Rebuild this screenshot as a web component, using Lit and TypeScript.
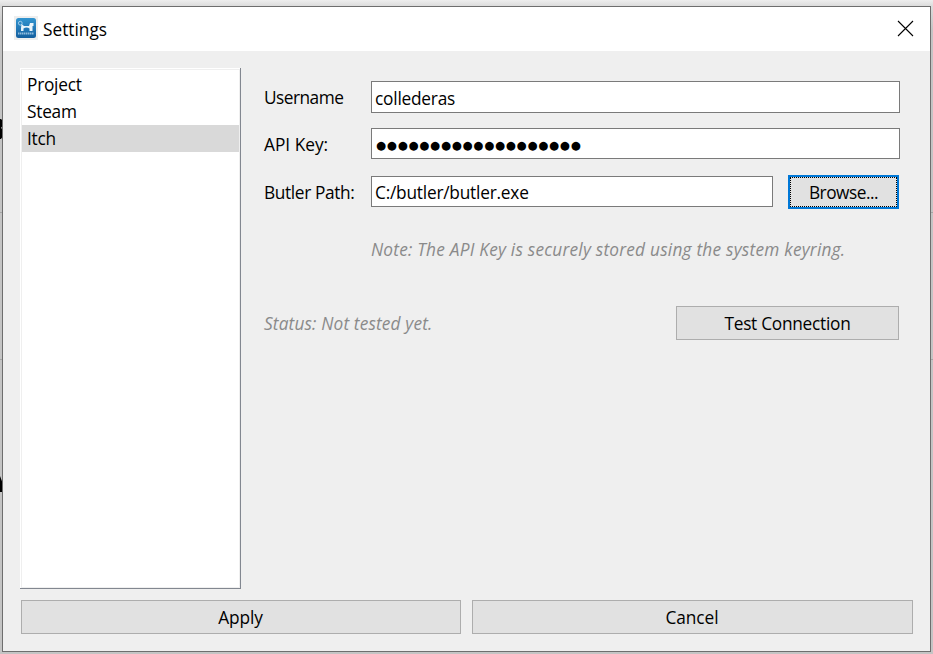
import { LitElement, html, css, svg } from "lit";
import { customElement, state } from "lit/decorators.js";

@customElement("app-root")
export class AppRoot extends LitElement {
  @state() private page = "Itch";

  static styles = css`
    :host {
      display: block;
      box-sizing: border-box;
      position: relative;
      width: 933px;
      height: 654px;
      padding: 6px 2px 2px;
      overflow: hidden;
      background: linear-gradient(#eeeeee 0, #dcdcdc 6px, #c4c4c4 30px, #c4c4c4 100%);
      font: 17.3px/24px "Open Sans", "Noto Sans", sans-serif;
      color: #000;
    }
    * { box-sizing: border-box; }
    .behind { position: absolute; inset: 0; width: 933px; height: 654px; }
    .window {
      position: relative;
      width: 929px;
      height: 646px;
      border: 1px solid #6e6e6e;
      background: #efefef;
      display: flex;
      flex-direction: column;
    }
    .titlebar {
      height: 44px;
      flex: none;
      background: #fff;
      display: flex;
      align-items: center;
      padding: 0 16px 0 11px;
    }
    .logo { width: 24px; height: 24px; margin-top: -2px; }
    .title { margin-left: 5px; padding-top: 2px; flex: 1; }
    .close { width: 17px; height: 17px; margin-top: -2px; }
    .body { display: flex; height: 521px; margin: 17px 0 0 17px; }
    .list {
      width: 221px;
      border: solid #828790;
      border-width: 0 1px 1px 0;
      background: #fff;
      padding: 3px 1px 0 2px;
      box-shadow: inset 1px 1px #fff, inset 2px 2px #efefef, inset -1px -1px #efefef;
    }
    .item { height: 27px; line-height: 27px; padding-left: 5px; letter-spacing: -0.25px; }
    .item.on { background: #d9d9d9; }
    .form { margin: 13px 0 0 23px; width: 636px; }
    .row { display: flex; height: 32px; align-items: center; margin-bottom: 15px; }
    .row.short { height: 31px; margin-bottom: 17px; }
    .label { width: 107px; flex: none; padding-top: 2px; }
    .username { letter-spacing: -0.52px; }
    .path { letter-spacing: -0.37px; }
    .field {
      height: 100%;
      flex: 1;
      display: flex;
      align-items: center;
      background: #fff;
      border: 1px solid #7a7a7a;
      padding: 3px 0 0 3px;
      letter-spacing: -0.22px;
    }
    .secret { font: 11.5px/20px "DejaVu Sans", sans-serif; letter-spacing: 0.78px; margin-left: 1px; }
    .btn {
      height: 34px;
      display: flex;
      align-items: center;
      justify-content: center;
      background: #e1e1e1;
      border: 1px solid #adadad;
      padding-top: 2px;
    }
    .browse {
      width: 111px;
      margin: 0 1px 0 15px;
      padding-top: 2px;
      border: 2px solid #0078d7;
      outline: 1px dotted #000;
      outline-offset: -3px;
      letter-spacing: -0.5px;
    }
    .note { margin: 31px 0 0 107px; letter-spacing: 0.21px; }
    .hint { font-style: italic; color: #8a8a8a; white-space: nowrap; }
    .status { display: flex; align-items: center; justify-content: space-between; margin: 44px 1px 0 0; letter-spacing: 0.14px; }
    .status .hint { padding-top: 2px; }
    .test { width: 223px; letter-spacing: -0.27px; }
    .footer { display: grid; grid-template-columns: 440px 441px; gap: 11px; margin: 11px 0 0 18px; letter-spacing: -0.1px; }
    .footer .btn { padding-right: 1px; }
  `;

  private logo() {
    return svg`<svg class="logo" viewBox="0 0 24 24">
      <defs><linearGradient id="g" x2="0" y2="1"><stop stop-color="#3295d0"/><stop offset="1" stop-color="#145f9f"/></linearGradient></defs>
      <rect width="24" height="24" fill="#eee"/>
      <rect x="2" y="2" width="20" height="20" rx="2.5" fill="url(#g)"/>
      <circle cx="6.3" cy="7.2" r="1.9" fill="none" stroke="#a9d3ee" stroke-width=".9"/>
      <path d="M7.500 8l2.500 2h5l1-3h3.500v3h-1v5h-3v-2.500q-3-2-6 0V15H7v-3z" fill="#e9f4fb"/>
      <path d="M4 17.500h16" stroke="#8fbbdc" stroke-width="2" stroke-dasharray="1.500 .5"/>
    </svg>`;
  }

  render() {
    return html`
      <svg class="behind" viewBox="0 0 933 654">
        <path d="M0 212.5H933M0 359.5H933" stroke="#a5a5a5"/>
        <path d="M0 119h1q2 1 2 4t-2 5q2 1 2 5t-2 6H0z M0 476l3 8v8H0z"/>
      </svg>
      <div class="window">
        <div class="titlebar">
          ${this.logo()}
          <span class="title">Settings</span>
          <svg class="close" viewBox="0 0 17 17"><path d="M1 1L16 16M16 1L1 16" stroke="#000" stroke-width="1.1"/></svg>
        </div>
        <div class="body">
          <div class="list">
            ${["Project", "Steam", "Itch"].map(
              (n) => html`<div class="item ${n === this.page ? "on" : ""}" @click=${() => (this.page = n)}>${n}</div>`
            )}
          </div>
          <div class="form">
            <div class="row"><span class="label username">Username</span><div class="field">collederas</div></div>
            <div class="row short"><span class="label">API Key:</span><div class="field"><span class="secret">${"●".repeat(19)}</span></div></div>
            <div class="row short"><span class="label path">Butler Path:</span><div class="field">C:/butler/butler.exe</div><div class="btn browse">Browse...</div></div>
            <div class="note hint">Note: The API Key is securely stored using the system keyring.</div>
            <div class="status"><span class="hint">Status: Not tested yet.</span><div class="btn test">Test Connection</div></div>
          </div>
        </div>
        <div class="footer"><div class="btn">Apply</div><div class="btn">Cancel</div></div>
      </div>
    `;
  }
}
